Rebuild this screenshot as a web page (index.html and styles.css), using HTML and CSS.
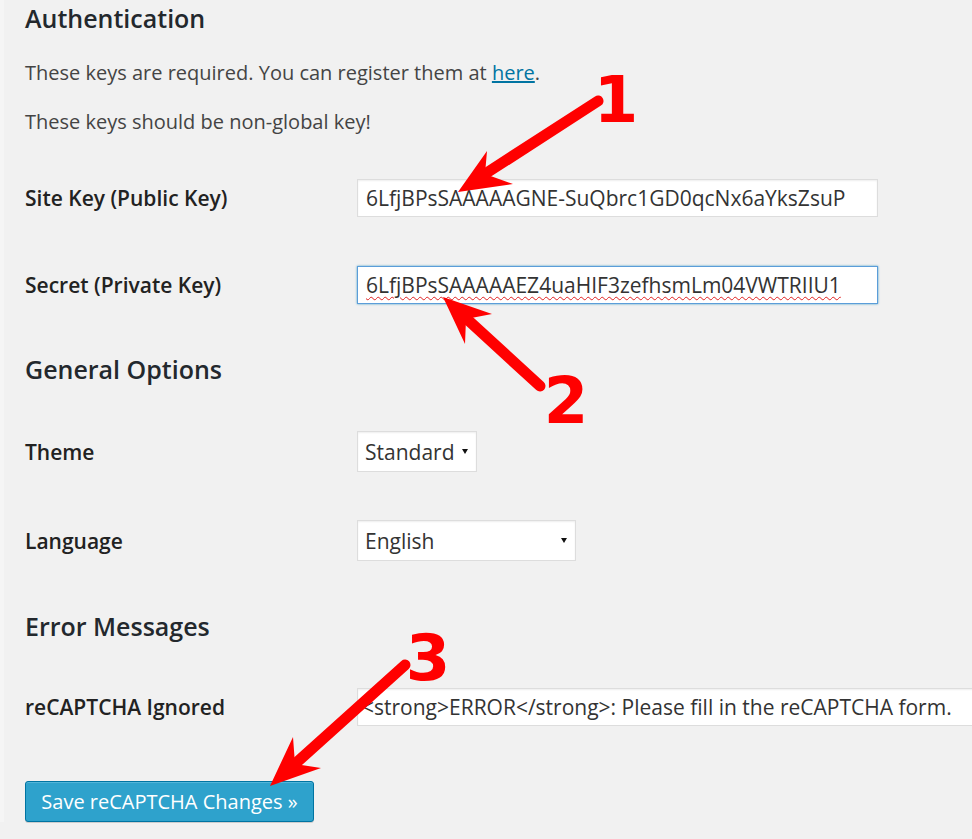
FILE: index.html
```html
<!DOCTYPE html>
<html>
<head>
<meta charset="utf-8">
<link rel="stylesheet" href="styles.css">
</head>
<body>
<div class="page">
  <h2 class="heading">Authentication</h2>
  <p class="note first">These keys are required. You can register them at <a href="#">here</a>.</p>
  <p class="note">These keys should be non-global key!</p>

  <div class="row row-site">
    <div class="label">Site Key (Public Key)</div>
    <div class="field key">6LfjBPsSAAAAAGNE-SuQbrc1GD0qcNx6aYksZsuP</div>
  </div>
  <div class="row row-secret">
    <div class="label">Secret (Private Key)</div>
    <div class="field key focused"><span class="misspelled">6LfjBPsSAAAAAEZ4uaHIF3zefhsmLm04VWTRIIU1</span></div>
  </div>

  <h2 class="heading section">General Options</h2>
  <div class="row row-theme">
    <div class="label">Theme</div>
    <div class="select theme"><span>Standard</span><i class="caret"></i></div>
  </div>
  <div class="row row-lang">
    <div class="label">Language</div>
    <div class="select lang"><span>English</span><i class="caret"></i></div>
  </div>

  <h2 class="heading section">Error Messages</h2>
  <div class="row row-error">
    <div class="label">reCAPTCHA Ignored</div>
    <div class="field wide">&lt;strong&gt;ERROR&lt;/strong&gt;: Please fill in the reCAPTCHA form.</div>
  </div>

  <button class="save">Save reCAPTCHA Changes »</button>
</div>

<svg class="annotations" width="972" height="839" viewBox="0 0 972 839">
  <g stroke="#ff0000" stroke-width="11" stroke-linecap="round" fill="none">
    <line x1="598" y1="101" x2="488" y2="172"/>
    <line x1="540" y1="386" x2="468" y2="320"/>
    <line x1="405" y1="665" x2="296" y2="763"/>
  </g>
  <g fill="#ff0000">
    <polygon points="458,192 487,151 485,174 513,184"/>
    <polygon points="443,297 492,314 466,319 465,344"/>
    <polygon points="270,786 293,737 295,764 321,768"/>
  </g>
  <g class="num" fill="#ff0000">
    <text x="616" y="122" text-anchor="middle">1</text>
    <text x="566" y="423" text-anchor="middle">2</text>
    <text x="428" y="680" text-anchor="middle">3</text>
  </g>
</svg>
</body>
</html>
```

FILE: styles.css
```css
html, body {
  margin: 0;
  padding: 0;
}
body {
  background: #f1f1f1;
  font-family: "Open Sans", "Liberation Sans", sans-serif;
  color: #444;
  width: 972px;
  height: 839px;
  overflow: hidden;
  position: relative;
}
.page {
  border-left: 4px solid #f5f5f5;
  padding-left: 21px;
}
.heading {
  margin: 0;
  font-size: 25px;
  line-height: 36px;
  font-weight: 600;
  color: #23282d;
}
.heading.section {
  margin-top: 47px;
}
.note {
  margin: 22px 0 0;
  font-size: 20px;
  line-height: 27px;
  color: #444;
}
.note.first {
  margin-top: 23px;
}
.note a {
  color: #0074a2;
  text-decoration: underline;
}
.row {
  display: flex;
  align-items: center;
}
.label {
  flex: none;
  width: 332px;
  font-size: 21px;
  font-weight: 600;
  color: #222;
}
.row-site { margin-top: 44px; }
.row-secret { margin-top: 49px; }
.row-theme { margin-top: 44px; }
.row-lang { margin-top: 48px; }
.row-error { margin-top: 44px; }

.field {
  box-sizing: border-box;
  height: 38px;
  line-height: 36px;
  background: #fff;
  border: 1px solid #ddd;
  box-shadow: inset 0 1px 2px rgba(0,0,0,.07);
  font-size: 21px;
  color: #333;
  padding-left: 8px;
  white-space: nowrap;
  overflow: hidden;
}
.field.key {
  width: 521px;
  flex: none;
}
.field.focused {
  border-color: #5b9dd9;
  box-shadow: 0 0 2px rgba(30,140,190,.8);
}
.misspelled {
  text-decoration: underline wavy #e02020;
  text-decoration-thickness: 1px;
  text-underline-offset: 3px;
}
.field.wide {
  width: 640px;
  flex: none;
  padding-left: 4px;
}
.select {
  flex: none;
  box-sizing: border-box;
  height: 41px;
  background: #fff;
  border: 1px solid #ddd;
  box-shadow: inset 0 1px 2px rgba(0,0,0,.07);
  display: flex;
  align-items: center;
  justify-content: space-between;
  padding: 0 8px 0 7px;
  font-size: 21px;
  color: #333;
}
.select.theme { width: 120px; }
.select.lang { width: 219px; }
.caret {
  width: 0;
  height: 0;
  border-left: 3px solid transparent;
  border-right: 3px solid transparent;
  border-top: 5px solid #111;
}
.save {
  display: block;
  margin-top: 55px;
  box-sizing: border-box;
  width: 289px;
  height: 41px;
  background: #2ea2cc;
  border: 1px solid #0074a2;
  border-radius: 3px;
  box-shadow: inset 0 1px 0 rgba(120,200,230,.5), 0 1px 0 rgba(0,0,0,.15);
  color: #fff;
  font-family: "Open Sans", "Liberation Sans", sans-serif;
  font-size: 20px;
  padding: 0;
  text-align: center;
}
.annotations {
  position: absolute;
  top: 0;
  left: 0;
  pointer-events: none;
}
.num text {
  font-family: "DejaVu Sans", sans-serif;
  font-weight: 700;
  font-size: 64px;
}
```
